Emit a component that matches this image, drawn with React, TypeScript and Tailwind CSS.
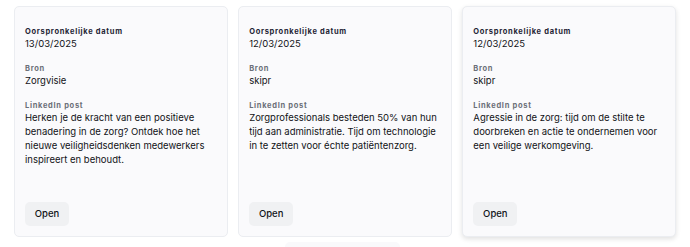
const posts = [
  {
    datum: '13/03/2025',
    bron: 'Zorgvisie',
    tekst: 'Herken je de kracht van een positieve benadering in de zorg? Ontdek hoe het nieuwe veiligheidsdenken medewerkers inspireert en behoudt.',
  },
  {
    datum: '12/03/2025',
    bron: 'skipr',
    tekst: 'Zorgprofessionals besteden 50% van hun tijd aan administratie. Tijd om technologie in te zetten voor échte patiëntenzorg.',
  },
  {
    datum: '12/03/2025',
    bron: 'skipr',
    tekst: 'Agressie in de zorg: tijd om de stilte te doorbreken en actie te ondernemen voor een veilige werkomgeving.',
    hover: true,
  },
]

function Field({ label, children, dark }: { label: string; children: React.ReactNode; dark?: boolean }) {
  return (
    <div>
      <p
        className={`text-[7.5px] leading-[11px] font-bold tracking-[0.7px] ${dark ? 'text-[#1f2535]' : 'text-[#6b6f78]'}`}
      >
        {label}
      </p>
      <div className="text-[9.5px] leading-[13.7px] text-[#111317]">{children}</div>
    </div>
  )
}

export default function App() {
  return (
    <div className="w-[690px] h-[247px] bg-white overflow-hidden relative font-['Inter','Noto_Sans',sans-serif]">
      <div className="grid grid-cols-3 gap-[10.5px] px-[14px] pt-[6px]">
        {posts.map((p, i) => (
          <div
            key={i}
            className={`h-[231px] flex flex-col rounded-[5px] border border-[#ebedf1] bg-[#fafafc] pt-[19px] px-[10px] pb-[10px] ${p.hover ? 'shadow-[0_2px_5px_rgba(0,0,0,0.12)]' : ''}`}
          >
            <div className="flex flex-col gap-[12.5px]">
              <Field label="Oorspronkelijke datum" dark>{p.datum}</Field>
              <Field label="Bron">{p.bron}</Field>
              <Field label="LinkedIn post">{p.tekst}</Field>
            </div>
            <button
              type="button"
              className="mt-auto w-[44px] h-[24px] rounded-[5px] bg-[#f0f1f3] text-[9.5px] text-[#111317] font-medium"
            >
              Open
            </button>
          </div>
        ))}
      </div>
      {/* vage schaduw onderaan */}
      <div className="absolute left-[285px] top-[242px] w-[115px] h-[10px] rounded-full bg-[#f9f9fb]" />
    </div>
  )
}
